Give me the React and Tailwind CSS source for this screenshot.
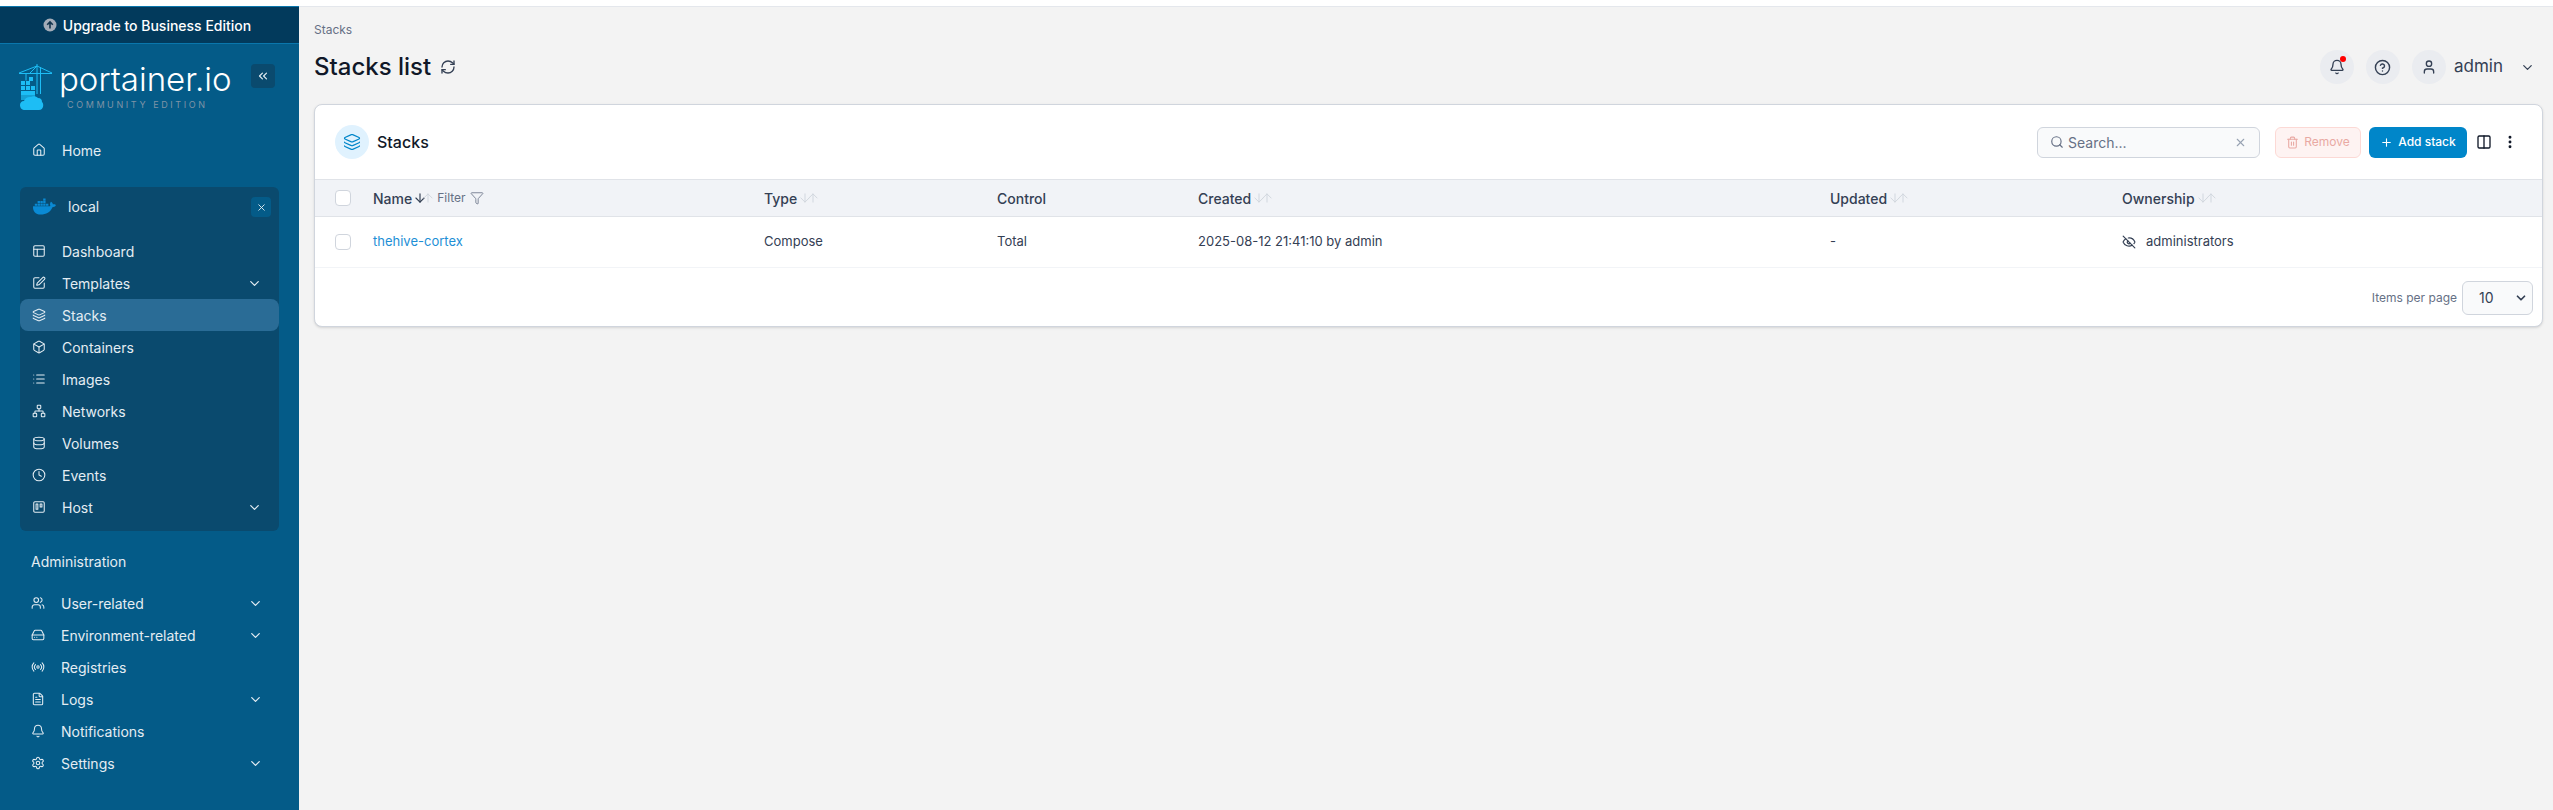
import React from "react";
import {
  Bell, Box, ChevronDown, ChevronsLeft, CircleHelp, Clock, Columns2, Database, EllipsisVertical, EyeOff,
  FileText, Filter, HardDrive, Home, Layers, List, Network, PanelsTopLeft, Plus, Radio, RefreshCw, Search,
  Settings, SquarePen, Trash2, User, Users, X, ArrowDown, ArrowUp, Trello,
} from "lucide-react";
import { FaDocker } from "react-icons/fa";

const envItems = [
  { label: "Dashboard", icon: PanelsTopLeft },
  { label: "Templates", icon: SquarePen, more: true },
  { label: "Stacks", icon: Layers, active: true },
  { label: "Containers", icon: Box },
  { label: "Images", icon: List },
  { label: "Networks", icon: Network },
  { label: "Volumes", icon: Database },
  { label: "Events", icon: Clock },
  { label: "Host", icon: Trello, more: true },
];

const adminItems = [
  { label: "User-related", icon: Users, more: true },
  { label: "Environment-related", icon: HardDrive, more: true },
  { label: "Registries", icon: Radio },
  { label: "Logs", icon: FileText, more: true },
  { label: "Notifications", icon: Bell },
  { label: "Settings", icon: Settings, more: true },
];

const tableCols = "grid grid-cols-[58px_391px_233px_201px_632px_292px_1fr] items-center";

function NavRow({ item }) {
  const Icon = item.icon;
  return (
    <div className={`flex h-8 items-center rounded-lg pl-[12px] pr-[17px] ${item.active ? "bg-[#2a6c96]" : ""}`}>
      <Icon size={14} strokeWidth={1.8} className="shrink-0" />
      <span className="ml-[16px] flex-1">{item.label}</span>
      {item.more && <ChevronDown size={15} strokeWidth={2} />}
    </div>
  );
}

function SortArrows({ active }) {
  return (
    <span className="ml-[1px] flex items-center">
      <ArrowDown size={14} strokeWidth={active ? 2 : 1.6} className={`-mr-[6px] ${active ? "text-[#344054]" : "text-[#d0d5dd]"}`} />
      <ArrowUp size={14} strokeWidth={1.6} className="text-[#d0d5dd]" />
    </span>
  );
}

function CircleButton({ children }) {
  return <div className="relative flex h-[34px] w-[34px] items-center justify-center rounded-full bg-[#eaecf0] text-[#344054]">{children}</div>;
}

function Logo() {
  return (
    <svg width="34" height="47" viewBox="0 0 34 47" fill="none" className="shrink-0">
      <g stroke="#1dbdf5" strokeWidth="1">
        <path d="M0 9.5h33M18 0v30M21.500 3v27M0 9L18 2l15 7M18 2l-7 7M7 9.500v7" />
      </g>
      <g fill="#1dbdf5">
        <path d="M2 17h4v4H2zM7 17h4v4H7zM2 22h4v4H2zM7 22h4v4H7zM12 22h4v4h-4zM2 27h14v4H2zM10 13h4v4h-4z" />
        <path d="M2 30h14v6H2z" opacity=".7" />
        <path d="M6 46c-3 0-5-2-5-5 0-2 1.500-4 4-4 1-3 4-4.500 7-4 2-1 5-1 7 1 3 0 4 2 4 4 2 1 2 8-3 8z" />
      </g>
    </svg>
  );
}

function Sidebar() {
  return (
    <aside className="flex w-[299px] shrink-0 flex-col bg-[#045b88] text-[14px] text-[#e4edf3]">
      <div className="flex h-[38px] items-center justify-center border-y border-[#0a77ad] bg-[#023a5c] pr-[5px] font-medium text-white">
        <svg width="14" height="14" viewBox="0 0 14 14" className="mr-[6px]">
          <circle cx="7" cy="7" r="6.500" fill="#a3acb8" />
          <path d="M7 10.500V4M4.200 6.800 7 4l2.800 2.800" stroke="#12344d" strokeWidth="1.600" fill="none" />
        </svg>
        Upgrade to Business Edition
      </div>

      <div className="flex h-[90px] items-start pl-[19px] pr-[24px] pt-[20px]">
        <Logo />
        <div className="ml-[6px] flex-1">
          <div className="mt-[-2px] h-[34px] whitespace-nowrap text-[33px] font-light leading-[34px] text-white">portainer.io</div>
          <div className="ml-[8px] mt-[4px] whitespace-nowrap text-[9px] leading-[10px] tracking-[2.6px] text-[#7f93a6]">COMMUNITY EDITION</div>
        </div>
        <div className="flex h-6 w-6 shrink-0 items-center justify-center rounded-[4px] bg-[#0a4a6e]">
          <ChevronsLeft size={14} />
        </div>
      </div>

      <div className="px-[20px]">
        <NavRow item={{ label: "Home", icon: Home }} />
      </div>

      <div className="mx-[20px] mt-[21px] rounded-md bg-[#0a4a6e] pb-2">
        <div className="flex h-12 items-start pl-[13px] pr-[8px] pt-[10px]">
          <FaDocker size={23} className="mt-[-2px] text-[#0a8ad4]" />
          <span className="ml-[12px] mt-[-1px]">local</span>
          <div className="ml-auto flex h-5 w-5 items-center justify-center rounded-[4px] bg-[#045b88]">
            <X size={11} />
          </div>
        </div>
        {envItems.map((item) => (
          <NavRow key={item.label} item={item} />
        ))}
      </div>

      <div className="h-[56px] pl-[31px] pt-[20px]">Administration</div>
      <div className="px-[19px]">
        {adminItems.map((item) => (
          <NavRow key={item.label} item={item} />
        ))}
      </div>
    </aside>
  );
}

function StacksCard() {
  return (
    <div className="mt-[19px] h-[223px] overflow-hidden rounded-lg border border-[#d0d5dd] bg-white text-[13px] text-[#344054] shadow-sm">
      <div className="flex h-[74px] items-center pl-5 pr-[24px] text-[12px]">
        <div className="flex h-[34px] w-[34px] items-center justify-center rounded-full bg-[#e0f2fe] text-[#0086c9]">
          <Layers size={18} strokeWidth={1.6} />
        </div>
        <span className="ml-2 flex-1 text-[16px] font-medium text-[#101828]">Stacks</span>
        <div className="flex h-[31px] w-[223px] items-center rounded-md border border-[#d0d5dd] bg-[#f9fafb] px-3 text-[14px] text-[#667085]">
          <Search size={14} />
          <span className="ml-[4px] flex-1">Search...</span>
          <X size={13} className="text-[#98a2b3]" />
        </div>
        <button className="ml-[15px] flex h-[31px] w-[86px] items-center justify-center gap-[5px] rounded-md border border-[#fcd9d5] bg-[#fef3f2] text-[#e9a9a3]">
          <Trash2 size={13} /> Remove
        </button>
        <button className="ml-2 flex h-[31px] w-[98px] items-center justify-center gap-[5px] rounded-md bg-[#0086c9] font-medium text-white">
          <Plus size={13} /> Add stack
        </button>
        <Columns2 size={16} strokeWidth={2} className="ml-[9px] text-[#101828]" />
        <EllipsisVertical size={16} strokeWidth={2.4} className="ml-[10px] text-[#101828]" />
      </div>

      <div className={`${tableCols} h-[38px] border-y border-[#e0e3e8] bg-[#f1f3f7] text-[14px]`}>
        <div className="pl-5"><div className="h-4 w-4 rounded-[4px] border border-[#d0d5dd] bg-white" /></div>
        <div className="flex items-center font-medium">
          Name <SortArrows active />
          <span className="ml-[2px] text-[12px] font-normal text-[#667085]">Filter</span>
          <Filter size={14} strokeWidth={1.4} className="ml-[4px] text-[#667085]" />
        </div>
        <div className="flex items-center font-medium">Type <SortArrows /></div>
        <div className="font-medium">Control</div>
        <div className="flex items-center font-medium">Created <SortArrows /></div>
        <div className="flex items-center font-medium">Updated <SortArrows /></div>
        <div className="flex items-center font-medium">Ownership <SortArrows /></div>
      </div>

      <div className={`${tableCols} h-[51px] border-b border-[#f2f4f7]`}>
        <div className="pl-5"><div className="h-4 w-4 rounded-[4px] border border-[#d0d5dd] bg-white" /></div>
        <div className="text-[#1d8fd6]">thehive-cortex</div>
        <div>Compose</div>
        <div>Total</div>
        <div>2025-08-12 21:41:10 by admin</div>
        <div>-</div>
        <div className="flex items-center gap-[10px]"><EyeOff size={14} /> administrators</div>
      </div>

      <div className="flex h-[59px] items-center justify-end pr-[9px] text-[12px] text-[#667085]">
        Items per page
        <div className="ml-[5px] flex h-[34px] w-[71px] items-center rounded-md border border-[#d0d5dd] bg-[#f9fafb] pl-[16px] pr-[4px] text-[14px] text-[#344054]">
          <span className="flex-1">10</span>
          <ChevronDown size={14} strokeWidth={3} className="text-[#344054]" />
        </div>
      </div>
    </div>
  );
}

export default function App() {
  return (
    <div className="flex min-h-screen flex-col bg-[#f3f3f3] [font-family:Inter,sans-serif]">
      <div className="h-[6px] bg-white" />
      <div className="flex h-[804px]">
        <Sidebar />
        <main className="flex-1 border-t border-[#e4e7ec] pl-[15px] pr-[10px]">
          <div className="pt-[15px] text-[12px] leading-[16px] text-[#667085]">Stacks</div>
          <div className="mt-[11px] flex h-[36px] items-center">
            <h1 className="text-[24px] font-medium text-[#101828]">Stacks list</h1>
            <RefreshCw size={16} className="ml-[9px] text-[#344054]" />
            <div className="ml-auto flex items-center gap-3">
              <CircleButton>
                <Bell size={16} />
                <span className="absolute right-[8px] top-[6px] h-[6px] w-[6px] rounded-full bg-[#f00]" />
              </CircleButton>
              <CircleButton><CircleHelp size={17} /></CircleButton>
              <CircleButton><User size={16} /></CircleButton>
            </div>
            <span className="ml-2 text-[17px] text-[#344054]">admin</span>
            <ChevronDown size={15} className="ml-[17px] mr-[8px] text-[#344054]" />
          </div>
          <StacksCard />
        </main>
      </div>
    </div>
  );
}
